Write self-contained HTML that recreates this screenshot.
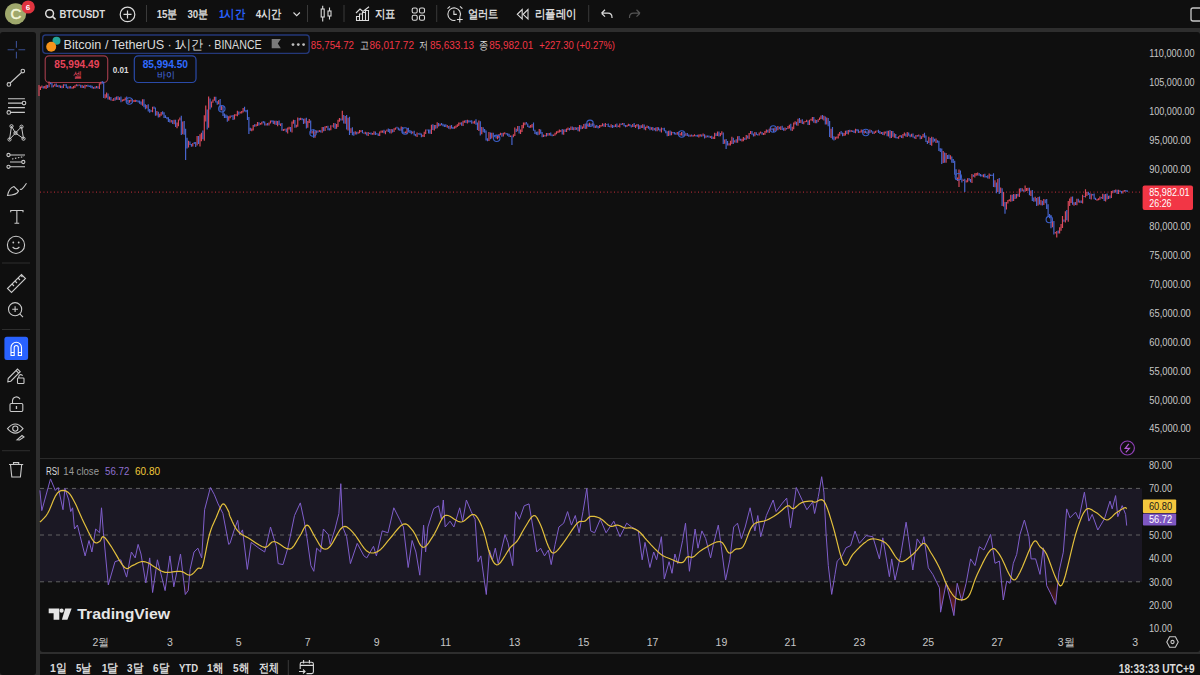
<!DOCTYPE html>
<html><head><meta charset="utf-8"><title>BTCUSDT chart</title>
<style>html,body{margin:0;padding:0;background:#0f0f0f;width:1200px;height:675px;overflow:hidden;font-family:"Liberation Sans", sans-serif;}</style>
</head><body>
<svg width="1200" height="675" viewBox="0 0 1200 675" style="display:block;font-family:&quot;Liberation Sans&quot;, sans-serif"><rect x="0" y="0" width="1200" height="675" fill="#2e2e2e"/>
<rect x="0" y="0" width="1200" height="28" fill="#0f0f0f"/>
<rect x="0" y="32" width="36" height="643" rx="3" fill="#0f0f0f"/>
<rect x="40" y="32" width="1160" height="620" rx="3" fill="#0f0f0f"/>
<rect x="40" y="654" width="1160" height="21" fill="#0f0f0f"/>
<circle cx="15.6" cy="13.8" r="10.6" fill="#9fa86c"/>
<text x="10.6" y="19.4" font-size="15" fill="#f4f6d8" font-weight="normal" stroke="#f4f6d8" stroke-width="0.5">C</text>
<circle cx="28.2" cy="7" r="6.6" fill="#e0343f"/>
<text x="25.8" y="10.0" font-size="8" fill="#ffffff" font-weight="bold" >6</text>
<g fill="none" stroke="#dbdbdb" stroke-width="1.5"><circle cx="49.6" cy="13.6" r="3.9"/><path d="M52.4 16.4 L55.6 19.4"/></g>
<text x="59.4" y="18.3" font-size="11.5" fill="#dbdbdb" font-weight="bold" textLength="45.6" lengthAdjust="spacingAndGlyphs" >BTCUSDT</text>
<g fill="none" stroke="#dbdbdb" stroke-width="1.2"><circle cx="127.5" cy="14.4" r="7.3"/><path d="M127.5 10.4 V18.4 M123.5 14.4 H131.5"/></g>
<rect x="146.0" y="5" width="1" height="17" fill="#3a3a3a"/>
<rect x="307.0" y="5" width="1" height="17" fill="#3a3a3a"/>
<rect x="343.5" y="5" width="1" height="17" fill="#3a3a3a"/>
<rect x="436.2" y="5" width="1" height="17" fill="#3a3a3a"/>
<rect x="588.2" y="5" width="1" height="17" fill="#3a3a3a"/>
<text x="156.7" y="18.3" font-size="11.5" fill="#dbdbdb" font-weight="bold" textLength="20.8" lengthAdjust="spacingAndGlyphs" >15분</text>
<text x="187.5" y="18.3" font-size="11.5" fill="#dbdbdb" font-weight="bold" textLength="20.8" lengthAdjust="spacingAndGlyphs" >30분</text>
<text x="219.0" y="18.3" font-size="11.5" fill="#2962ff" font-weight="bold" textLength="26.0" lengthAdjust="spacingAndGlyphs" >1시간</text>
<text x="255.8" y="18.3" font-size="11.5" fill="#dbdbdb" font-weight="bold" textLength="25.9" lengthAdjust="spacingAndGlyphs" >4시간</text>
<path d="M293.5 12.5 L296.7 15.7 L299.9 12.5" fill="none" stroke="#dbdbdb" stroke-width="1.1"/>
<g fill="none" stroke="#dbdbdb" stroke-width="1.1"><rect x="321.2" y="9" width="3" height="8"/><path d="M322.7 5.8 V9 M322.7 17 V21.5"/><rect x="328" y="11" width="3" height="5"/><path d="M329.5 7.5 V11 M329.5 16 V19.5"/></g>
<g fill="none" stroke="#dbdbdb" stroke-width="1.1"><path d="M356 13 L360 9 L363 11.5 L369 6.8"/><path d="M356.5 20.5 V16.5 H359.5 V20.5 M359.5 20.5 V14 H362.5 V20.5 M362.5 20.5 V12.5 H365.5 V20.5 M365.5 20.5 V10.5 H368.5 V20.5 M356 20.5 H369"/></g>
<text x="375.0" y="18.3" font-size="11.5" fill="#dbdbdb" font-weight="bold" textLength="20.8" lengthAdjust="spacingAndGlyphs" >지표</text>
<g fill="none" stroke="#dbdbdb" stroke-width="1.1"><rect x="412.2" y="8" width="5" height="5" rx="1.5"/><rect x="419.5" y="8" width="5" height="5" rx="1.5"/><rect x="412.2" y="15.3" width="5" height="5" rx="1.5"/><rect x="419.5" y="15.3" width="5" height="5" rx="1.5"/></g>
<g fill="none" stroke="#dbdbdb" stroke-width="1.1"><path d="M460 16.5 A6.3 6.3 0 1 0 455.5 20.3"/><path d="M453.9 10.5 V14.4 H456.8"/><path d="M447.5 8.6 L450 6.3 M460 6.3 L462.4 8.6"/><path d="M459.8 16.5 V22.4 M456.9 19.5 H462.7"/></g>
<text x="467.5" y="18.3" font-size="11.5" fill="#dbdbdb" font-weight="bold" textLength="30.8" lengthAdjust="spacingAndGlyphs" >얼러트</text>
<g fill="none" stroke="#dbdbdb" stroke-width="1.1"><path d="M522.2 9.5 L517.3 14.3 L522.2 19 Z"/><path d="M528 9.5 L523.1 14.3 L528 19 Z"/></g>
<text x="535.0" y="18.3" font-size="11.5" fill="#dbdbdb" font-weight="bold" textLength="41.7" lengthAdjust="spacingAndGlyphs" >리플레이</text>
<path d="M601.5 13.2 L605 9.8 M601.5 13.2 L605 16.6 M601.5 13.2 H608 Q612 13.2 612 17.5 V18" fill="none" stroke="#dbdbdb" stroke-width="1.2"/>
<path d="M640 13.2 L636.5 9.8 M640 13.2 L636.5 16.6 M640 13.2 H633.5 Q629.5 13.2 629.5 17.5 V18" fill="none" stroke="#555" stroke-width="1.2"/>
<rect x="1191" y="8" width="12" height="13" rx="2" fill="none" stroke="#c8c8c8" stroke-width="1.3"/>
<path d="M16.4 41 V47.8 M16.4 51.8 V58.6 M7.6 49.8 H14.4 M18.4 49.8 H25.2" stroke="#3a4f92" stroke-width="1.1" fill="none"/>
<g stroke="#c9c9c9" stroke-width="1.1" fill="none"><path d="M10.2 83 L21.5 72.5"/><circle cx="8.9" cy="84.4" r="1.8"/><circle cx="22.8" cy="71.1" r="1.8"/></g>
<g stroke="#c9c9c9" stroke-width="1.1" fill="none"><path d="M8 98.7 H24.9 M8 103.1 H22.3 M8 107.6 H24.9 M10.6 112.4 H24.9"/><circle cx="24" cy="103.1" r="1.8"/><circle cx="8.8" cy="112.4" r="1.8"/></g>
<g stroke="#c9c9c9" stroke-width="1" fill="none"><path d="M11.5 126.2 L15.5 133 L21.5 126.7 L23.5 138.7 L15.5 133 L9.5 139.5 Z"/><circle cx="11.5" cy="126.2" r="1.6"/><circle cx="21.5" cy="126.7" r="1.6"/><circle cx="15.5" cy="133" r="1.6"/><circle cx="9.5" cy="139.5" r="1.6"/><circle cx="23.5" cy="138.7" r="1.6"/></g>
<g stroke="#c9c9c9" stroke-width="1.1" fill="none"><path d="M10 155 H25 M10 162 H21.8 M10 166.8 H25"/><path d="M12 159 L24 156.5" stroke-dasharray="1.5 1.5"/><circle cx="8.5" cy="155" r="1.6"/><circle cx="23.3" cy="162" r="1.6"/><circle cx="8.5" cy="166.8" r="1.6"/></g>
<g stroke="#c9c9c9" stroke-width="1.1" fill="none"><path d="M7.5 195.5 Q9 188 14 186.5 L18.5 191 Q17 195 7.5 195.5 Z"/><path d="M20 189 Q21.5 191 26.5 183.3"/></g>
<g stroke="#c9c9c9" stroke-width="1.1" fill="none"><path d="M10.7 212.3 V210.5 H23 V212.3 M16.85 210.5 V223.3 M14.5 223.3 H19.2"/></g>
<g stroke="#c9c9c9" stroke-width="1.1" fill="none"><circle cx="16" cy="244.9" r="8.6"/><path d="M12.6 247 Q16 250.5 19.4 247"/></g><circle cx="13.3" cy="242.5" r="0.9" fill="#c9c9c9"/><circle cx="18.7" cy="242.5" r="0.9" fill="#c9c9c9"/>
<rect x="2" y="262.5" width="28" height="1" fill="#2e2e2e"/>
<g stroke="#c9c9c9" stroke-width="1.1" fill="none"><path d="M7.5 288.5 L21.5 274.5 L25.5 278.5 L11.5 292.5 Z"/><path d="M12 284 L14 286 M15 281 L17 283 M18 278 L20 280 M21 275.5 L22.5 277"/></g>
<g stroke="#c9c9c9" stroke-width="1.1" fill="none"><circle cx="15.1" cy="309.2" r="6.6"/><path d="M19.8 313.9 L23 317.1 M12.2 309.2 H18 M15.1 306.3 V312.1"/></g>
<rect x="2" y="329" width="28" height="1" fill="#2e2e2e"/>
<rect x="4.4" y="336.8" width="23.7" height="23.1" rx="2.5" fill="#2962ff"/>
<g stroke="#ffffff" stroke-width="1.1" fill="none"><path d="M11 355.5 V347.5 A5.25 5.25 0 0 1 21.5 347.5 V355.5 H18.3 V347.5 A2.05 2.05 0 0 0 14.2 347.5 V355.5 Z M11 352.5 H14.2 M18.3 352.5 H21.5"/></g>
<g stroke="#c9c9c9" stroke-width="1.1" fill="none"><path d="M8.2 378.5 L17.5 369 L20.2 371.7 L10.8 381.2 L7.8 381.8 Z M16 370.5 L18.7 373.2"/><rect x="17.5" y="378" width="6.5" height="5.5" rx="0.8"/><path d="M18.8 378 V376.3 A2 2 0 0 1 22.6 375.8"/></g>
<g stroke="#c9c9c9" stroke-width="1.1" fill="none"><rect x="10" y="403.5" width="12.8" height="8" rx="1.2"/><path d="M12.5 403.5 V400.5 A3.9 3.9 0 0 1 20 399.3"/></g><rect x="15.8" y="406" width="1.3" height="3" fill="#c9c9c9"/>
<g stroke="#c9c9c9" stroke-width="1.1" fill="none"><path d="M7.5 428.6 Q15.3 419.5 23 428.6 Q15.3 437.7 7.5 428.6 Z"/><circle cx="15.3" cy="428.6" r="2.6"/><path d="M17 439.8 L22 435.5 L24 437 L19.5 440 Z"/></g>
<rect x="2" y="450.2" width="28" height="1" fill="#2e2e2e"/>
<g stroke="#c9c9c9" stroke-width="1.1" fill="none"><path d="M9 464.5 H23.2 M13.5 464.5 V462.6 H18.7 V464.5 M10.5 464.5 L11.8 477 H20.4 L21.7 464.5"/></g>
<rect x="42.7" y="35" width="266.5" height="18.3" rx="3" fill="#0f0f0f" stroke="#24387a" stroke-width="1.3"/>
<circle cx="56.5" cy="40.8" r="4" fill="#26a69a"/><circle cx="51.2" cy="46.7" r="5" fill="#f7931a"/>
<text x="63.5" y="49.0" font-size="12.5" fill="#dbdbdb" font-weight="normal" textLength="100.8" lengthAdjust="spacingAndGlyphs" >Bitcoin / TetherUS</text>
<text x="167.5" y="49.0" font-size="12.5" fill="#dbdbdb" font-weight="normal" >·</text>
<text x="174.5" y="49.0" font-size="12.5" fill="#dbdbdb" font-weight="normal" >1</text>
<text x="179.3" y="49.0" font-size="12.5" fill="#dbdbdb" font-weight="normal" textLength="24.2" lengthAdjust="spacingAndGlyphs" >시간</text>
<text x="207.5" y="49.0" font-size="12.5" fill="#dbdbdb" font-weight="normal" >·</text>
<text x="214.3" y="49.0" font-size="12.5" fill="#dbdbdb" font-weight="normal" textLength="47.4" lengthAdjust="spacingAndGlyphs" >BINANCE</text>
<path d="M271.7 39 H280.8 L277.8 43.6 L280.8 48.3 H271.7 Z" fill="#7a7a7a"/>
<circle cx="293" cy="44.6" r="1.4" fill="#bdbdbd"/><circle cx="298.3" cy="44.6" r="1.4" fill="#bdbdbd"/><circle cx="303.6" cy="44.6" r="1.4" fill="#bdbdbd"/>
<text x="310.8" y="48.7" font-size="11" fill="#f23645" font-weight="normal" textLength="43.2" lengthAdjust="spacingAndGlyphs" >85,754.72</text>
<text x="360.0" y="48.7" font-size="11" fill="#dbdbdb" font-weight="normal" textLength="9.0" lengthAdjust="spacingAndGlyphs" >고</text>
<text x="369.5" y="48.7" font-size="11" fill="#f23645" font-weight="normal" textLength="44.5" lengthAdjust="spacingAndGlyphs" >86,017.72</text>
<text x="419.3" y="48.7" font-size="11" fill="#dbdbdb" font-weight="normal" textLength="9.0" lengthAdjust="spacingAndGlyphs" >저</text>
<text x="430.0" y="48.7" font-size="11" fill="#f23645" font-weight="normal" textLength="44.0" lengthAdjust="spacingAndGlyphs" >85,633.13</text>
<text x="479.0" y="48.7" font-size="11" fill="#dbdbdb" font-weight="normal" textLength="9.3" lengthAdjust="spacingAndGlyphs" >종</text>
<text x="489.3" y="48.7" font-size="11" fill="#f23645" font-weight="normal" textLength="44.0" lengthAdjust="spacingAndGlyphs" >85,982.01</text>
<text x="539.3" y="48.7" font-size="11" fill="#f23645" font-weight="normal" textLength="75.7" lengthAdjust="spacingAndGlyphs" >+227.30 (+0.27%)</text>
<rect x="45.2" y="55.8" width="62.5" height="26.7" rx="4" fill="#0f0f0f" stroke="#9a3a48" stroke-width="1.2"/>
<text x="54.3" y="68.0" font-size="10.5" fill="#e8445a" font-weight="bold" textLength="45.0" lengthAdjust="spacingAndGlyphs" >85,994.49</text>
<text x="72.5" y="78.2" font-size="9" fill="#e8445a" font-weight="normal" >셀</text>
<text x="112.7" y="73.4" font-size="9.5" fill="#dbdbdb" font-weight="bold" textLength="15.8" lengthAdjust="spacingAndGlyphs" >0.01</text>
<rect x="134.3" y="55.8" width="61.7" height="26.7" rx="4" fill="#0f0f0f" stroke="#2a4aa8" stroke-width="1.2"/>
<text x="142.7" y="68.0" font-size="10.5" fill="#2f6bff" font-weight="bold" textLength="45.3" lengthAdjust="spacingAndGlyphs" >85,994.50</text>
<text x="157.0" y="78.2" font-size="9" fill="#4a74ec" font-weight="normal" >바이</text>
<text x="1149.3" y="57.3" font-size="10.5" fill="#c7c7c7" font-weight="normal" textLength="45.2" lengthAdjust="spacingAndGlyphs" >110,000.00</text>
<text x="1149.3" y="86.1" font-size="10.5" fill="#c7c7c7" font-weight="normal" textLength="45.2" lengthAdjust="spacingAndGlyphs" >105,000.00</text>
<text x="1149.3" y="115.0" font-size="10.5" fill="#c7c7c7" font-weight="normal" textLength="45.2" lengthAdjust="spacingAndGlyphs" >100,000.00</text>
<text x="1149.3" y="143.8" font-size="10.5" fill="#c7c7c7" font-weight="normal" textLength="41.5" lengthAdjust="spacingAndGlyphs" >95,000.00</text>
<text x="1149.3" y="172.7" font-size="10.5" fill="#c7c7c7" font-weight="normal" textLength="41.5" lengthAdjust="spacingAndGlyphs" >90,000.00</text>
<text x="1149.3" y="230.4" font-size="10.5" fill="#c7c7c7" font-weight="normal" textLength="41.5" lengthAdjust="spacingAndGlyphs" >80,000.00</text>
<text x="1149.3" y="259.2" font-size="10.5" fill="#c7c7c7" font-weight="normal" textLength="41.5" lengthAdjust="spacingAndGlyphs" >75,000.00</text>
<text x="1149.3" y="288.1" font-size="10.5" fill="#c7c7c7" font-weight="normal" textLength="41.5" lengthAdjust="spacingAndGlyphs" >70,000.00</text>
<text x="1149.3" y="316.9" font-size="10.5" fill="#c7c7c7" font-weight="normal" textLength="41.5" lengthAdjust="spacingAndGlyphs" >65,000.00</text>
<text x="1149.3" y="345.8" font-size="10.5" fill="#c7c7c7" font-weight="normal" textLength="41.5" lengthAdjust="spacingAndGlyphs" >60,000.00</text>
<text x="1149.3" y="374.6" font-size="10.5" fill="#c7c7c7" font-weight="normal" textLength="41.5" lengthAdjust="spacingAndGlyphs" >55,000.00</text>
<text x="1149.3" y="403.5" font-size="10.5" fill="#c7c7c7" font-weight="normal" textLength="41.5" lengthAdjust="spacingAndGlyphs" >50,000.00</text>
<text x="1149.3" y="432.3" font-size="10.5" fill="#c7c7c7" font-weight="normal" textLength="41.5" lengthAdjust="spacingAndGlyphs" >45,000.00</text>
<path d="M40 192.1 H1140" stroke="#f23645" stroke-width="1" stroke-dasharray="1 2.5" opacity="0.8"/>
<path d="M39.0 85.0V96.0M40.44 86.6V90.0M41.88 85.6V87.9M44.75 86.0V88.5M46.19 84.7V89.1M49.06 81.5V87.2M53.38 85.2V87.3M54.81 83.7V86.3M57.69 85.3V86.9M60.56 85.5V88.1M63.44 84.3V88.1M69.19 86.3V88.6M72.06 86.9V88.8M73.5 85.9V88.4M74.94 85.2V88.1M76.38 84.2V86.3M79.25 84.6V85.8M82.12 85.1V88.1M85.0 84.8V88.6M86.44 85.0V86.5M93.62 87.1V88.7M96.5 85.9V88.2M99.38 83.3V89.0M100.81 81.8V84.6M105.12 94.2V98.6M106.56 92.6V97.7M109.44 96.5V99.8M112.31 99.4V100.7M113.75 98.1V101.0M116.62 96.4V99.8M119.5 97.3V100.1M122.38 99.6V101.5M123.81 99.0V101.1M125.25 97.4V100.3M129.56 100.0V102.8M131.0 99.5V101.4M133.88 99.9V102.1M135.31 99.7V102.0M142.5 99.2V105.8M146.81 105.1V108.6M152.56 106.8V112.3M156.88 111.0V115.6M159.75 113.7V117.3M161.19 112.0V115.7M171.25 120.1V122.6M174.12 119.8V124.3M177.0 122.4V128.2M178.44 119.5V126.2M179.88 117.6V120.6M182.75 121.4V134.2M188.5 140.7V147.6M192.81 142.9V146.6M197.12 136.1V145.5M200.0 134.3V146.5M201.44 132.7V141.2M204.31 115.2V140.7M205.75 105.6V121.5M208.62 96.4V127.7M211.5 101.4V107.4M212.94 99.5V102.7M214.38 96.7V100.8M218.69 99.9V104.2M221.56 105.4V110.2M228.75 116.3V120.7M230.19 115.6V118.3M234.5 114.3V119.4M235.94 114.2V115.8M237.38 110.7V116.3M240.25 111.7V113.6M241.69 111.0V113.5M243.12 108.1V112.4M251.75 128.6V131.3M253.19 125.0V130.5M256.06 124.2V126.5M257.5 121.9V125.9M260.38 122.9V124.8M261.81 121.8V124.5M266.12 123.6V125.6M269.0 122.6V125.5M270.44 120.4V123.5M274.75 120.8V124.5M277.62 121.1V126.3M280.5 123.5V126.1M283.38 129.1V130.9M284.81 128.7V130.4M287.69 127.4V133.6M289.12 126.8V129.4M292.0 121.4V132.5M293.44 119.8V123.8M296.31 124.8V127.4M297.75 117.4V126.8M300.62 117.8V120.0M304.94 118.4V123.5M307.81 121.1V127.8M309.25 119.1V122.9M312.12 130.7V133.6M315.0 131.2V137.7M316.44 130.5V133.1M319.31 130.0V132.0M322.19 127.0V132.7M325.06 126.2V130.9M326.5 126.1V127.7M330.81 125.3V130.2M333.69 123.0V127.7M336.56 123.9V128.8M338.0 119.8V126.9M339.44 117.9V121.8M342.31 110.8V120.6M345.19 116.0V123.7M348.06 117.7V130.5M350.94 128.3V133.1M355.25 131.2V134.6M358.12 131.8V133.7M359.56 130.1V133.3M361.0 130.3V131.9M365.31 131.7V134.2M368.19 131.9V136.1M372.5 132.9V134.7M373.94 131.3V134.8M379.69 131.4V136.0M381.12 130.6V132.8M382.56 130.5V132.7M385.44 130.7V134.2M386.88 129.4V131.6M391.19 129.0V133.4M394.06 128.3V132.0M395.5 127.5V129.7M401.25 126.6V130.7M405.56 131.5V133.2M407.0 128.7V134.3M412.75 131.5V133.4M417.06 132.5V137.0M422.81 134.7V136.7M424.25 131.8V137.1M425.69 129.4V134.1M431.44 124.7V134.1M434.31 125.1V130.6M437.19 122.3V128.3M440.06 123.7V125.9M447.25 125.1V127.8M450.12 125.6V129.3M454.44 126.3V128.8M455.88 125.4V128.3M457.31 124.3V127.1M458.75 122.6V126.0M460.19 122.6V124.4M463.06 120.7V126.0M464.5 120.6V122.7M467.38 119.8V123.4M473.12 121.4V123.5M474.56 120.7V123.8M478.88 120.4V131.1M481.75 127.1V134.3M488.94 131.9V141.1M491.81 132.7V138.4M497.56 135.9V139.2M499.0 133.9V138.1M500.44 132.7V135.3M503.31 132.7V136.6M504.75 132.3V134.2M510.5 135.5V137.0M513.38 134.2V137.3M514.81 127.6V136.1M517.69 125.9V131.3M520.56 129.6V133.9M522.0 125.0V131.9M523.44 122.6V128.3M524.88 122.4V125.2M530.62 124.9V127.7M532.06 123.9V127.6M539.25 129.0V134.8M543.56 134.5V137.0M546.44 133.1V136.5M549.31 133.0V135.6M553.62 134.4V136.0M555.06 132.7V135.4M556.5 131.3V134.2M557.94 130.8V133.1M559.38 129.4V132.5M560.81 130.0V132.0M563.69 129.6V134.8M566.56 128.4V132.1M568.0 127.4V130.1M570.88 126.6V130.1M573.75 127.2V130.3M576.62 127.6V129.8M579.5 125.1V131.4M582.38 126.4V128.9M583.81 124.0V128.2M586.69 123.5V128.7M589.56 122.8V126.4M592.44 123.3V126.3M595.31 125.5V127.9M599.62 125.0V128.0M601.06 125.1V126.7M602.5 123.3V126.3M605.38 123.1V126.9M611.12 124.3V127.4M615.44 124.3V127.1M618.31 125.4V127.1M619.75 123.6V127.4M622.62 123.1V124.8M626.94 125.0V126.9M628.38 123.8V126.0M632.69 124.0V127.0M635.56 125.1V127.9M637.0 124.0V126.6M639.88 125.2V128.9M642.75 124.3V128.1M645.62 126.8V130.2M647.06 125.4V127.9M651.38 127.3V129.8M654.25 127.9V130.2M657.12 126.9V131.3M661.44 127.6V132.5M668.62 130.7V136.1M671.5 131.6V135.3M677.25 132.0V134.7M680.12 133.2V135.5M681.56 132.0V135.4M684.44 134.3V136.1M685.88 133.2V135.7M690.19 134.7V136.7M693.06 135.0V136.8M694.5 134.2V136.3M698.81 134.5V137.4M700.25 134.2V136.5M703.12 133.6V136.2M706.0 135.6V137.8M710.31 136.0V138.1M713.19 136.8V139.1M714.62 132.7V138.9M717.5 131.5V136.0M720.38 132.9V136.2M721.81 131.2V134.7M724.69 139.4V143.7M729.0 143.3V145.4M730.44 140.8V145.5M731.88 136.8V144.0M734.75 140.3V142.6M737.62 136.2V142.8M741.94 138.8V141.6M743.38 136.9V141.2M746.25 135.1V139.7M749.12 133.0V138.9M750.56 131.1V134.0M754.88 131.9V136.2M759.19 132.6V135.5M760.62 131.5V133.6M763.5 133.1V135.1M764.94 131.1V134.7M766.38 129.4V132.8M769.25 128.8V133.0M770.69 127.5V130.5M775.0 127.6V131.5M777.88 126.1V130.3M780.75 126.3V130.0M785.06 127.4V130.7M787.94 125.9V128.9M789.38 124.8V128.6M792.25 126.8V130.9M793.69 122.4V129.2M795.12 121.2V124.4M798.0 118.8V125.8M800.88 119.7V123.1M803.75 121.6V124.2M805.19 121.0V122.3M806.62 119.8V121.9M809.5 119.7V125.0M810.94 118.8V120.6M812.38 117.1V121.2M815.25 119.4V123.3M818.12 119.2V122.0M819.56 117.4V119.9M821.0 115.4V118.9M823.88 115.7V120.4M826.75 117.4V124.5M831.06 128.7V137.9M835.38 136.7V139.7M836.81 136.5V138.4M838.25 133.7V138.4M839.69 131.9V135.7M844.0 133.0V136.0M845.44 130.7V135.5M848.31 130.0V134.5M851.19 129.9V132.1M855.5 128.7V133.2M859.81 131.2V132.8M861.25 129.5V132.4M864.12 130.7V133.4M868.44 131.1V133.5M869.88 129.6V133.0M874.19 131.5V133.9M875.62 130.8V133.0M877.06 130.6V131.4M881.38 131.9V134.0M884.25 131.6V135.3M885.69 131.4V133.6M888.56 130.8V136.5M891.44 131.1V138.0M894.31 133.3V137.8M898.62 136.2V138.7M900.06 135.0V137.1M902.94 134.1V138.3M904.38 132.6V135.7M907.25 132.1V136.9M911.56 133.8V136.7M915.88 135.0V139.0M918.75 134.5V136.4M921.62 136.2V138.9M923.06 134.0V137.3M928.81 136.8V142.9M931.69 136.7V145.8M936.0 138.5V143.1M943.19 150.9V162.9M946.06 152.9V162.8M950.38 155.3V159.4M957.56 177.4V181.1M959.0 169.5V187.0M963.31 179.5V181.0M966.19 180.3V182.6M967.62 178.2V182.2M971.94 174.1V183.1M974.81 173.3V177.4M976.25 173.0V175.7M977.69 172.5V175.5M983.44 174.3V177.3M989.19 173.6V178.8M994.94 180.2V187.2M997.81 178.9V192.0M1000.69 187.5V193.1M1003.56 192.0V206.5M1006.44 201.9V209.4M1007.88 200.1V203.6M1009.31 199.3V201.2M1010.75 194.8V201.7M1013.62 194.1V201.0M1016.5 193.9V198.6M1019.38 188.4V197.1M1022.25 188.3V191.3M1025.12 185.6V191.7M1026.56 188.1V191.1M1028.0 187.7V190.7M1030.88 190.4V196.0M1035.19 196.7V201.5M1038.06 197.0V205.5M1040.94 200.0V205.3M1043.81 199.1V205.1M1052.44 218.8V227.2M1055.31 232.1V233.4M1056.75 230.9V237.4M1059.62 227.3V233.5M1061.06 223.9V230.8M1062.5 216.1V228.1M1065.38 211.3V222.5M1068.25 200.9V221.7M1069.69 198.4V205.9M1071.12 196.7V202.9M1074.0 202.3V205.8M1076.88 198.7V205.2M1079.75 200.5V202.8M1082.62 194.8V203.5M1085.5 189.3V197.5M1086.94 191.9V195.9M1091.25 193.8V199.6M1097.0 199.1V200.8M1098.44 198.3V200.3M1099.88 196.6V199.7M1102.75 193.7V199.0M1105.62 193.9V201.6M1108.5 195.8V198.9M1111.38 190.9V198.1M1112.81 190.6V193.2M1115.69 189.6V192.6M1118.56 189.8V193.9M1122.88 190.7V193.5M1124.31 189.9V191.8" stroke="#dc4a5c" stroke-width="1.15" fill="none"/>
<path d="M43.31 86.2V88.5M47.62 85.0V88.1M50.5 82.4V84.3M51.94 83.1V87.4M56.25 83.4V86.9M59.12 85.1V87.5M62.0 85.7V88.3M64.88 84.2V85.7M66.31 84.3V88.0M67.75 86.6V88.8M70.62 86.0V88.6M77.81 84.6V86.2M80.69 84.8V87.7M83.56 85.7V88.1M87.88 84.7V86.8M89.31 85.6V86.9M90.75 85.3V87.8M92.19 85.8V88.4M95.06 86.4V88.8M97.94 86.2V88.4M102.25 81.0V83.7M103.69 81.7V98.1M108.0 93.4V99.6M110.88 96.9V100.6M115.19 97.3V100.4M118.06 96.2V100.0M120.94 96.5V102.2M126.69 96.6V101.9M128.12 99.8V103.6M132.44 98.9V102.5M136.75 100.0V101.7M138.19 100.5V102.6M139.62 100.6V103.8M141.06 101.6V104.7M143.94 99.2V107.3M145.38 104.2V109.2M148.25 104.2V111.4M149.69 109.1V112.7M151.12 110.2V111.7M154.0 106.5V108.8M155.44 107.4V115.7M158.31 111.7V117.5M162.62 111.3V114.6M164.06 112.3V117.9M165.5 115.2V118.1M166.94 116.9V119.2M168.38 117.3V122.0M169.81 119.0V122.5M172.69 120.2V124.0M175.56 119.7V127.0M181.31 115.7V135.1M184.19 121.1V134.8M185.62 128.7V160.0M187.06 137.8V148.5M189.94 141.4V145.1M191.38 144.0V146.8M194.25 142.1V143.9M195.69 141.9V147.0M198.56 135.9V144.1M202.88 130.6V139.3M207.19 109.4V129.6M210.06 98.4V109.5M215.81 96.8V102.5M217.25 101.3V104.7M220.12 99.1V110.4M223.0 106.7V116.1M224.44 113.4V118.1M225.88 114.4V118.0M227.31 115.5V121.8M231.62 115.5V116.7M233.06 114.9V119.9M238.81 111.6V114.8M244.56 106.7V111.4M246.0 109.9V112.3M247.44 109.8V119.9M248.88 116.9V134.0M250.31 127.8V130.7M254.62 124.3V126.7M258.94 122.2V125.5M263.25 121.1V123.2M264.69 121.4V125.4M267.56 123.0V125.4M271.88 120.2V122.3M273.31 120.4V123.9M276.19 120.7V125.0M279.06 120.5V125.0M281.94 123.0V130.8M286.25 128.4V132.3M290.56 126.9V131.8M294.88 120.0V127.7M299.19 118.0V120.4M302.06 118.0V120.3M303.5 118.7V124.0M306.38 117.8V128.5M310.69 120.4V133.5M313.56 129.6V137.8M317.88 130.6V132.8M320.75 130.2V132.4M323.62 127.0V131.2M327.94 125.7V130.3M329.38 128.3V130.6M332.25 125.4V126.6M335.12 123.2V129.0M340.88 118.4V120.4M343.75 115.1V123.6M346.62 115.0V129.5M349.5 116.7V135.0M352.38 127.2V135.2M353.81 131.8V135.8M356.69 131.7V134.5M362.44 129.9V133.3M363.88 132.4V133.8M366.75 132.3V135.6M369.62 132.8V134.1M371.06 132.6V134.7M375.38 131.5V135.1M376.81 133.2V134.6M378.25 133.5V136.1M384.0 129.7V133.3M388.31 128.4V131.9M389.75 129.1V133.3M392.62 129.2V132.4M396.94 126.7V128.4M398.38 127.5V130.2M399.81 128.4V130.7M402.69 126.9V132.9M404.12 131.8V133.7M408.44 127.8V132.1M409.88 130.0V132.9M411.31 130.8V134.3M414.19 130.7V135.5M415.62 134.1V136.2M418.5 133.3V134.6M419.94 132.7V135.0M421.38 133.5V137.2M427.12 129.6V130.6M428.56 129.4V133.6M430.0 129.6V133.7M432.88 124.2V130.0M435.75 124.9V128.8M438.62 122.9V126.5M441.5 123.1V125.3M442.94 123.8V126.3M444.38 124.4V127.0M445.81 124.3V127.1M448.69 125.9V128.7M451.56 124.9V128.4M453.0 126.9V128.9M461.62 122.3V125.7M465.94 120.0V123.1M468.81 120.2V122.5M470.25 120.4V122.2M471.69 120.2V123.7M476.0 119.2V124.7M477.44 122.5V130.1M480.31 121.3V135.4M483.19 127.2V132.2M484.62 128.9V132.8M486.06 130.4V140.5M487.5 138.2V141.3M490.38 132.5V139.3M493.25 132.7V136.8M494.69 135.2V136.7M496.12 135.3V138.4M501.88 133.0V136.7M506.19 132.9V134.6M507.62 133.2V135.7M509.06 133.8V137.0M511.94 135.5V145.0M516.25 128.8V131.9M519.12 125.9V133.6M526.31 122.0V124.6M527.75 123.6V127.1M529.19 125.7V128.0M533.5 122.6V130.8M534.94 129.7V133.9M536.38 131.7V134.7M537.81 131.5V135.3M540.69 129.4V133.8M542.12 132.1V137.3M545.0 134.9V136.4M547.88 133.1V135.8M550.75 132.6V135.7M552.19 134.5V136.3M562.25 129.1V134.5M565.12 129.2V132.0M569.44 128.0V130.4M572.31 126.5V130.0M575.19 127.0V130.0M578.06 127.1V131.3M580.94 125.2V129.2M585.25 123.4V129.1M588.12 123.6V126.4M591.0 123.8V125.7M593.88 123.7V127.8M596.75 125.0V127.7M598.19 126.0V128.4M603.94 123.7V126.7M606.81 123.9V124.7M608.25 123.5V127.1M609.69 125.7V127.2M612.56 125.0V127.9M614.0 125.6V127.2M616.88 123.6V127.4M621.19 123.4V124.9M624.06 123.0V126.2M625.5 124.9V127.3M629.81 124.0V126.2M631.25 125.3V127.6M634.12 122.9V127.0M638.44 124.3V129.2M641.31 125.3V128.0M644.19 124.5V129.6M648.5 126.1V128.8M649.94 126.8V130.2M652.81 127.1V130.7M655.69 127.6V131.2M658.56 127.2V130.2M660.0 128.8V131.6M662.88 128.3V129.5M664.31 127.8V131.3M665.75 130.2V133.3M667.19 131.2V136.2M670.06 130.4V135.6M672.94 131.9V133.3M674.38 131.9V134.6M675.81 132.8V134.7M678.69 131.7V135.5M683.0 132.0V136.5M687.31 133.1V136.0M688.75 134.4V136.7M691.62 134.5V136.6M695.94 135.0V136.5M697.38 134.7V136.8M701.69 134.4V136.8M704.56 134.2V138.6M707.44 135.6V137.3M708.88 135.6V137.6M711.75 135.7V139.1M716.06 133.2V136.1M718.94 131.4V136.4M723.25 132.4V144.1M726.12 139.0V149.0M727.56 140.9V145.4M733.31 137.8V143.9M736.19 139.3V142.8M739.06 135.9V140.4M740.5 138.7V140.8M744.81 137.8V140.0M747.69 135.4V138.6M752.0 131.1V134.8M753.44 133.5V136.4M756.31 132.2V135.1M757.75 134.0V135.6M762.06 132.0V134.8M767.81 129.7V132.6M772.12 128.2V130.2M773.56 128.3V132.0M776.44 127.3V130.2M779.31 126.7V129.3M782.19 125.8V129.9M783.62 127.8V130.7M786.5 127.9V129.6M790.81 123.8V130.6M796.56 121.8V125.5M799.44 117.9V123.1M802.31 119.2V124.0M808.06 120.4V125.1M813.81 117.1V122.8M816.69 120.0V123.3M822.44 115.0V119.6M825.31 116.4V124.5M828.19 118.1V126.3M829.62 121.1V137.0M832.5 127.0V139.5M833.94 136.3V140.6M841.12 131.1V134.2M842.56 132.4V136.3M846.88 130.6V134.0M849.75 129.8V132.3M852.62 130.4V132.1M854.06 130.4V132.9M856.94 129.0V131.2M858.38 129.4V133.0M862.69 129.8V133.0M865.56 130.6V133.0M867.0 131.6V134.0M871.31 130.0V132.5M872.75 131.3V133.9M878.5 129.8V132.9M879.94 130.9V134.0M882.81 132.0V135.1M887.12 130.7V136.3M890.0 129.9V138.2M892.88 130.9V136.8M895.75 133.9V138.2M897.19 136.9V138.5M901.5 135.3V138.1M905.81 133.5V136.6M908.69 132.5V135.8M910.12 134.4V137.3M913.0 133.4V137.4M914.44 136.4V138.6M917.31 135.1V136.7M920.19 135.3V139.3M924.5 132.8V137.7M925.94 135.5V142.0M927.38 140.8V144.1M930.25 137.9V145.1M933.12 137.3V142.6M934.56 138.8V141.6M937.44 140.3V142.7M938.88 140.7V151.0M940.31 148.3V152.0M941.75 148.6V164.0M944.62 152.4V162.8M947.5 154.9V159.1M948.94 154.4V159.0M951.81 156.4V162.8M953.25 158.9V163.1M954.69 160.7V174.7M956.12 169.3V180.0M960.44 170.6V180.1M961.88 178.4V182.5M964.75 178.8V192.0M969.06 177.9V180.8M970.5 178.9V182.3M973.38 174.8V176.8M979.12 173.0V175.8M980.56 173.9V176.5M982.0 174.7V176.6M984.88 173.8V177.5M986.31 176.0V177.5M987.75 175.3V178.6M990.62 174.5V176.1M992.06 174.7V176.1M993.5 173.2V187.0M996.38 182.5V193.2M999.25 178.0V193.9M1002.12 188.3V205.9M1005.0 202.0V213.7M1012.19 194.8V201.3M1015.06 194.3V199.0M1017.94 193.7V196.6M1020.81 188.1V191.7M1023.69 189.5V191.8M1029.44 187.7V195.3M1032.31 190.0V201.1M1033.75 197.6V201.8M1036.62 198.1V206.1M1039.5 196.6V204.4M1042.38 200.7V205.4M1045.25 199.5V203.3M1046.69 199.0V209.1M1048.12 204.2V215.9M1049.56 214.1V218.2M1051.0 215.1V228.2M1053.88 221.0V234.4M1058.19 230.6V233.5M1063.94 219.4V221.8M1066.81 209.9V220.2M1072.56 196.5V204.8M1075.44 202.1V205.1M1078.31 198.8V202.4M1081.19 200.5V203.1M1084.06 196.0V197.1M1088.38 191.8V194.9M1089.81 193.1V199.0M1092.69 193.9V195.5M1094.12 193.5V199.2M1095.56 197.7V200.1M1101.31 197.0V198.6M1104.19 194.3V201.1M1107.06 193.5V199.4M1109.94 195.5V198.5M1114.25 190.1V192.7M1117.12 189.7V194.1M1120.0 190.2V192.0M1121.44 191.0V193.5M1125.75 189.9V191.6M1127.19 190.2V192.0" stroke="#4a68d4" stroke-width="1.15" fill="none"/>
<circle cx="129.3" cy="101.0" r="3.2" fill="none" stroke="#3b5fc8" stroke-width="1.1"/>
<circle cx="221.8" cy="108.8" r="3.2" fill="none" stroke="#3b5fc8" stroke-width="1.1"/>
<circle cx="313" cy="133.0" r="3.2" fill="none" stroke="#3b5fc8" stroke-width="1.1"/>
<circle cx="405" cy="131.0" r="3.2" fill="none" stroke="#3b5fc8" stroke-width="1.1"/>
<circle cx="496.7" cy="138.3" r="3.2" fill="none" stroke="#3b5fc8" stroke-width="1.1"/>
<circle cx="590" cy="123.3" r="3.2" fill="none" stroke="#3b5fc8" stroke-width="1.1"/>
<circle cx="681.7" cy="134.0" r="3.2" fill="none" stroke="#3b5fc8" stroke-width="1.1"/>
<circle cx="773.3" cy="129.0" r="3.2" fill="none" stroke="#3b5fc8" stroke-width="1.1"/>
<circle cx="865.8" cy="132.5" r="3.2" fill="none" stroke="#3b5fc8" stroke-width="1.1"/>
<circle cx="958.3" cy="176.7" r="3.2" fill="none" stroke="#3b5fc8" stroke-width="1.1"/>
<circle cx="1049.3" cy="219.6" r="3.2" fill="none" stroke="#3b5fc8" stroke-width="1.1"/>
<rect x="1142.6" y="185.6" width="50.4" height="24.4" rx="2" fill="#f23645"/>
<text x="1149.3" y="196.2" font-size="10" fill="#ffffff" font-weight="normal" textLength="40.2" lengthAdjust="spacingAndGlyphs" >85,982.01</text>
<text x="1149.3" y="207.1" font-size="10" fill="#ffffff" font-weight="normal" textLength="22.2" lengthAdjust="spacingAndGlyphs" >26:26</text>
<circle cx="1127.4" cy="448" r="7" fill="#0f0f0f" stroke="#8e3fb5" stroke-width="1.2"/>
<path d="M1128.8 443.8 L1125.2 448.4 H1129.4 L1125.8 452.4" stroke="#b65bd8" stroke-width="1.2" fill="none"/>
<rect x="40" y="458" width="1160" height="1" fill="#2a2a2a"/>
<rect x="40" y="488.4" width="1102" height="93.4" fill="#1b1824"/>
<path d="M40 488.4 H1140" stroke="#6a6a6a" stroke-width="1" stroke-dasharray="4 4" opacity="0.9"/>
<path d="M40 535.0 H1140" stroke="#6a6a6a" stroke-width="1" stroke-dasharray="4 4" opacity="0.9"/>
<path d="M40 581.8 H1140" stroke="#6a6a6a" stroke-width="1" stroke-dasharray="4 4" opacity="0.9"/>
<clipPath id="below30"><rect x="40" y="581.75" width="1100" height="60"/></clipPath>
<linearGradient id="osg" x1="0" y1="581.75" x2="0" y2="628.45" gradientUnits="userSpaceOnUse"><stop offset="0" stop-color="#f23645" stop-opacity="0"/><stop offset="1" stop-color="#f23645" stop-opacity="0.75"/></linearGradient>
<polygon points="39.9,581.75 39.9,490.4 41.8,510.6 50.5,478.9 55.3,490.4 58.2,487.5 63.0,509.7 64.9,488.5 68.8,500.0 70.7,511.6 72.6,507.8 74.5,529.0 77.4,525.0 80.3,536.7 85.1,555.9 89.0,540.5 91.9,552.0 95.7,529.0 99.6,532.8 101.5,507.8 103.4,532.8 108.3,584.8 115.0,561.7 120.8,559.8 126.6,577.1 131.4,552.0 135.2,557.9 138.1,544.4 141.0,554.0 145.8,582.9 149.7,557.9 152.6,592.5 157.4,559.8 165.1,590.6 169.9,555.9 173.8,586.8 180.5,554.0 185.3,594.5 188.2,590.6 190.1,569.4 194.0,552.0 197.9,548.2 201.7,557.9 204.6,509.7 210.4,487.5 214.2,494.3 218.1,503.9 222.9,513.5 228.7,544.4 230.0,543.4 233.9,530.9 237.7,520.3 239.6,534.7 242.5,529.9 247.3,569.4 251.2,542.4 258.9,548.2 264.7,552.0 270.5,527.0 276.2,546.3 278.2,563.6 283.0,564.6 287.8,548.2 294.5,515.5 300.3,502.9 304.2,521.2 307.1,538.6 310.9,565.6 313.8,571.3 316.7,548.2 320.6,552.0 323.4,529.0 328.3,534.7 330.2,544.4 335.0,529.0 338.9,513.5 340.8,483.7 342.7,527.0 346.6,536.7 350.4,563.6 357.2,543.4 363.9,555.9 366.8,557.9 373.5,546.3 376.4,555.9 382.2,530.9 388.0,532.8 393.8,507.8 399.6,519.3 403.4,527.0 408.2,567.5 412.1,540.5 415.9,552.0 419.8,575.2 423.6,525.1 425.6,552.0 427.9,527.0 433.7,508.7 438.5,505.8 441.4,519.3 443.3,500.0 445.2,527.0 450.0,521.2 453.9,527.0 459.7,507.8 462.6,521.2 466.4,500.0 471.2,511.6 475.1,519.3 478.0,561.7 480.9,555.9 483.8,577.1 486.3,594.5 489.5,550.1 492.4,559.8 495.3,548.2 498.2,563.6 505.0,534.7 507.9,542.4 512.7,565.6 515.6,511.6 519.4,519.3 524.2,505.8 529.0,503.9 532.9,527.0 536.8,552.0 540.6,548.2 544.5,555.9 548.3,550.1 551.2,564.6 555.1,544.4 558.9,527.0 563.7,523.2 567.6,511.6 571.4,525.1 575.3,515.5 579.1,532.8 583.0,511.6 586.8,488.5 590.7,530.9 594.6,532.8 600.3,519.3 606.1,532.8 613.8,521.2 620.0,536.7 626.7,523.2 631.6,527.0 638.3,530.9 642.2,559.8 645.0,542.4 649.9,567.5 653.7,552.0 656.6,559.8 661.4,536.7 664.3,579.0 669.1,561.7 672.0,573.3 674.9,554.0 677.8,563.6 682.6,540.5 685.5,523.2 689.4,571.3 695.1,529.0 698.0,548.2 701.9,530.9 705.7,538.6 710.6,557.9 713.4,544.4 718.3,525.1 721.2,546.3 725.6,580.0 729.8,559.8 733.7,527.0 737.5,523.2 741.4,538.6 745.2,527.0 750.1,507.8 754.9,530.9 757.8,515.5 760.7,536.7 766.4,515.5 773.2,500.0 776.1,511.6 781.8,503.9 786.7,498.1 790.5,528.0 796.3,487.5 802.1,500.0 806.9,509.7 812.7,502.0 814.6,513.5 818.3,496.7 821.7,476.7 823.9,492.2 826.1,534.4 828.3,565.6 831.7,594.4 835.0,574.4 837.2,561.1 841.7,556.7 846.1,547.8 850.6,545.6 855.0,531.1 859.4,543.3 866.1,535.6 872.8,536.7 879.4,558.9 882.8,537.8 889.4,576.7 891.7,558.9 895.0,580.0 900.6,555.6 906.1,522.2 908.3,536.7 912.8,570.0 917.2,538.9 921.7,545.6 923.9,536.7 928.3,567.8 932.8,574.4 939.4,587.8 940.6,612.2 946.1,583.3 950.6,601.1 953.9,615.6 957.2,583.3 961.7,601.1 966.1,583.3 970.6,558.9 975.0,565.6 979.4,546.7 983.9,550.0 990.6,534.4 995.0,563.3 999.4,561.1 1003.3,600.0 1006.7,581.1 1010.0,583.3 1013.3,563.3 1016.7,554.4 1020.0,534.4 1024.4,520.0 1028.9,536.7 1031.1,558.9 1035.6,558.9 1040.0,574.4 1043.3,547.8 1046.7,585.6 1051.1,594.4 1055.6,604.4 1058.9,572.2 1063.3,552.2 1066.7,508.9 1070.0,517.8 1075.6,512.2 1078.9,518.9 1084.4,492.2 1088.9,521.1 1092.2,514.4 1097.8,530.0 1104.4,518.9 1110.0,501.1 1112.2,508.9 1115.6,495.6 1117.8,516.7 1122.2,505.6 1125.6,514.4 1126.7,525.6 1126.7,581.75" fill="url(#osg)" clip-path="url(#below30)"/>
<polyline points="39.9,490.4 41.8,510.6 50.5,478.9 55.3,490.4 58.2,487.5 63.0,509.7 64.9,488.5 68.8,500.0 70.7,511.6 72.6,507.8 74.5,529.0 77.4,525.0 80.3,536.7 85.1,555.9 89.0,540.5 91.9,552.0 95.7,529.0 99.6,532.8 101.5,507.8 103.4,532.8 108.3,584.8 115.0,561.7 120.8,559.8 126.6,577.1 131.4,552.0 135.2,557.9 138.1,544.4 141.0,554.0 145.8,582.9 149.7,557.9 152.6,592.5 157.4,559.8 165.1,590.6 169.9,555.9 173.8,586.8 180.5,554.0 185.3,594.5 188.2,590.6 190.1,569.4 194.0,552.0 197.9,548.2 201.7,557.9 204.6,509.7 210.4,487.5 214.2,494.3 218.1,503.9 222.9,513.5 228.7,544.4 230.0,543.4 233.9,530.9 237.7,520.3 239.6,534.7 242.5,529.9 247.3,569.4 251.2,542.4 258.9,548.2 264.7,552.0 270.5,527.0 276.2,546.3 278.2,563.6 283.0,564.6 287.8,548.2 294.5,515.5 300.3,502.9 304.2,521.2 307.1,538.6 310.9,565.6 313.8,571.3 316.7,548.2 320.6,552.0 323.4,529.0 328.3,534.7 330.2,544.4 335.0,529.0 338.9,513.5 340.8,483.7 342.7,527.0 346.6,536.7 350.4,563.6 357.2,543.4 363.9,555.9 366.8,557.9 373.5,546.3 376.4,555.9 382.2,530.9 388.0,532.8 393.8,507.8 399.6,519.3 403.4,527.0 408.2,567.5 412.1,540.5 415.9,552.0 419.8,575.2 423.6,525.1 425.6,552.0 427.9,527.0 433.7,508.7 438.5,505.8 441.4,519.3 443.3,500.0 445.2,527.0 450.0,521.2 453.9,527.0 459.7,507.8 462.6,521.2 466.4,500.0 471.2,511.6 475.1,519.3 478.0,561.7 480.9,555.9 483.8,577.1 486.3,594.5 489.5,550.1 492.4,559.8 495.3,548.2 498.2,563.6 505.0,534.7 507.9,542.4 512.7,565.6 515.6,511.6 519.4,519.3 524.2,505.8 529.0,503.9 532.9,527.0 536.8,552.0 540.6,548.2 544.5,555.9 548.3,550.1 551.2,564.6 555.1,544.4 558.9,527.0 563.7,523.2 567.6,511.6 571.4,525.1 575.3,515.5 579.1,532.8 583.0,511.6 586.8,488.5 590.7,530.9 594.6,532.8 600.3,519.3 606.1,532.8 613.8,521.2 620.0,536.7 626.7,523.2 631.6,527.0 638.3,530.9 642.2,559.8 645.0,542.4 649.9,567.5 653.7,552.0 656.6,559.8 661.4,536.7 664.3,579.0 669.1,561.7 672.0,573.3 674.9,554.0 677.8,563.6 682.6,540.5 685.5,523.2 689.4,571.3 695.1,529.0 698.0,548.2 701.9,530.9 705.7,538.6 710.6,557.9 713.4,544.4 718.3,525.1 721.2,546.3 725.6,580.0 729.8,559.8 733.7,527.0 737.5,523.2 741.4,538.6 745.2,527.0 750.1,507.8 754.9,530.9 757.8,515.5 760.7,536.7 766.4,515.5 773.2,500.0 776.1,511.6 781.8,503.9 786.7,498.1 790.5,528.0 796.3,487.5 802.1,500.0 806.9,509.7 812.7,502.0 814.6,513.5 818.3,496.7 821.7,476.7 823.9,492.2 826.1,534.4 828.3,565.6 831.7,594.4 835.0,574.4 837.2,561.1 841.7,556.7 846.1,547.8 850.6,545.6 855.0,531.1 859.4,543.3 866.1,535.6 872.8,536.7 879.4,558.9 882.8,537.8 889.4,576.7 891.7,558.9 895.0,580.0 900.6,555.6 906.1,522.2 908.3,536.7 912.8,570.0 917.2,538.9 921.7,545.6 923.9,536.7 928.3,567.8 932.8,574.4 939.4,587.8 940.6,612.2 946.1,583.3 950.6,601.1 953.9,615.6 957.2,583.3 961.7,601.1 966.1,583.3 970.6,558.9 975.0,565.6 979.4,546.7 983.9,550.0 990.6,534.4 995.0,563.3 999.4,561.1 1003.3,600.0 1006.7,581.1 1010.0,583.3 1013.3,563.3 1016.7,554.4 1020.0,534.4 1024.4,520.0 1028.9,536.7 1031.1,558.9 1035.6,558.9 1040.0,574.4 1043.3,547.8 1046.7,585.6 1051.1,594.4 1055.6,604.4 1058.9,572.2 1063.3,552.2 1066.7,508.9 1070.0,517.8 1075.6,512.2 1078.9,518.9 1084.4,492.2 1088.9,521.1 1092.2,514.4 1097.8,530.0 1104.4,518.9 1110.0,501.1 1112.2,508.9 1115.6,495.6 1117.8,516.7 1122.2,505.6 1125.6,514.4 1126.7,525.6" fill="none" stroke="#7f5ecb" stroke-width="1" stroke-linejoin="round"/>
<polyline points="39.9,522.2 40.9,521.2 42.3,519.9 44.0,518.2 45.8,516.1 47.6,513.5 49.4,509.9 51.3,505.4 53.3,500.6 55.2,496.4 57.2,493.3 59.2,491.5 61.1,490.6 63.1,490.4 65.0,490.7 66.8,491.4 68.4,492.6 69.9,494.2 71.4,496.4 72.9,499.0 74.5,502.0 76.3,505.6 78.2,509.9 80.2,514.4 82.2,519.0 84.2,523.2 86.2,527.3 88.2,531.6 90.2,535.6 92.1,539.1 93.8,541.5 95.2,542.7 96.5,543.0 97.6,542.7 98.6,542.1 99.6,541.5 100.4,540.6 101.1,539.2 101.7,537.8 102.4,536.8 103.4,536.7 104.6,537.5 105.9,538.9 107.4,540.9 109.1,543.4 111.1,546.3 113.5,550.2 116.4,555.1 119.3,560.1 122.2,564.6 124.6,567.5 126.5,568.6 128.0,568.5 129.4,567.6 130.8,566.5 132.3,565.6 134.0,564.9 135.8,563.9 137.6,563.0 139.4,562.2 141.0,561.7 142.5,561.5 143.8,561.6 145.1,561.8 146.4,562.2 147.8,562.7 149.3,563.4 150.7,564.3 152.2,565.4 153.8,566.5 155.5,567.5 157.2,568.6 158.9,569.7 160.8,570.8 162.8,571.7 165.1,572.3 167.9,572.4 171.1,572.1 174.5,571.6 177.7,571.3 180.5,571.3 182.8,571.9 184.8,573.0 186.7,574.2 188.4,575.0 190.1,575.2 191.8,574.5 193.5,573.1 195.1,571.3 196.6,569.7 197.9,568.4 199.0,568.0 199.9,568.3 200.8,568.6 201.7,567.9 202.7,565.6 203.9,561.0 205.2,554.6 206.6,547.4 208.0,540.5 209.4,534.7 210.8,530.3 212.1,526.6 213.5,523.4 214.8,520.4 216.2,517.4 217.6,514.1 218.9,510.7 220.3,507.6 221.6,505.2 222.9,503.9 224.2,504.1 225.5,505.6 226.7,507.7 227.8,509.9 228.7,511.6 229.1,512.6 229.2,513.3 229.2,513.9 229.4,514.9 230.0,516.4 231.1,518.8 232.4,521.8 234.0,525.1 235.8,528.3 237.7,530.9 239.7,532.9 241.9,534.4 244.2,535.8 246.7,537.1 249.3,538.6 252.2,540.5 255.5,542.7 258.8,544.8 261.9,546.5 264.7,547.3 266.9,546.9 268.7,545.4 270.3,543.5 272.1,542.0 274.3,541.5 277.1,542.5 280.3,544.6 283.7,546.9 286.9,548.7 289.7,549.2 292.0,548.0 294.1,545.6 295.9,542.6 297.7,539.5 299.4,536.7 301.1,534.0 302.6,530.9 304.1,528.0 305.6,525.9 307.1,525.1 308.6,525.9 310.2,528.1 311.7,531.0 313.3,534.0 314.8,536.7 316.3,539.2 317.9,542.0 319.4,544.6 321.0,546.8 322.5,548.2 324.0,549.0 325.3,549.2 326.8,549.0 328.4,548.0 330.2,546.3 332.4,543.2 334.9,538.6 337.6,533.7 340.2,529.5 342.7,527.0 344.9,526.4 346.9,526.9 348.9,528.4 351.0,530.4 353.3,532.8 355.8,536.0 358.6,540.1 361.4,544.5 364.2,548.4 366.8,551.1 369.2,552.5 371.6,553.0 373.9,552.9 376.1,552.2 378.4,551.1 380.7,549.4 382.9,547.1 385.2,544.3 387.5,541.4 389.9,538.6 392.5,535.5 395.3,531.9 398.2,528.5 400.9,525.7 403.4,524.1 405.6,523.9 407.5,524.8 409.3,526.5 411.1,528.6 413.0,530.9 414.9,534.0 416.9,538.1 418.8,542.2 420.7,545.6 422.7,547.3 424.7,547.0 426.7,545.4 428.7,542.8 430.7,539.7 432.7,536.7 434.7,533.3 436.8,529.2 438.8,525.0 440.6,521.2 442.3,518.4 443.6,516.7 444.7,515.7 445.7,515.3 446.8,515.3 448.1,515.5 449.9,516.2 451.9,517.4 454.0,518.9 456.1,520.3 457.8,521.2 459.1,521.7 460.1,521.9 461.1,522.0 462.1,521.7 463.5,521.2 465.3,519.9 467.5,518.0 469.8,516.0 472.0,514.6 474.1,514.5 476.0,515.8 477.8,518.2 479.5,521.3 481.2,525.0 482.8,529.0 484.4,533.9 486.0,539.7 487.5,545.9 489.0,551.5 490.5,555.9 492.0,559.2 493.4,561.9 494.8,563.8 496.4,564.8 498.2,564.6 500.3,562.8 502.7,559.4 505.3,555.3 507.7,551.3 509.8,548.2 511.6,546.2 513.2,544.8 514.6,543.6 516.0,542.3 517.5,540.5 519.0,538.1 520.5,535.4 522.0,532.5 523.6,529.7 525.2,527.0 526.9,524.2 528.7,521.2 530.5,518.5 532.3,516.4 533.9,515.5 535.4,515.9 536.7,517.3 537.9,519.4 539.2,522.1 540.6,525.1 542.1,528.8 543.7,533.4 545.3,538.3 546.9,542.8 548.3,546.3 549.5,548.8 550.6,550.9 551.6,552.3 552.7,553.0 554.1,553.0 555.7,552.1 557.5,550.4 559.4,548.1 561.5,545.3 563.7,542.4 566.2,538.8 569.1,534.5 572.0,530.1 574.8,526.1 577.2,523.2 579.1,521.7 580.8,521.3 582.2,521.4 583.6,521.5 584.9,521.2 586.1,520.3 587.2,519.2 588.2,518.0 589.3,517.0 590.7,516.4 592.4,516.3 594.3,516.4 596.3,516.9 598.3,517.5 600.3,518.4 602.3,519.7 604.3,521.5 606.3,523.4 608.2,525.0 610.0,526.1 611.7,526.4 613.2,526.1 614.7,525.6 616.2,525.2 617.7,525.1 619.2,525.5 620.7,526.1 622.1,526.9 623.6,527.5 625.0,528.0 626.3,528.1 627.6,528.0 628.9,527.9 630.2,527.8 631.6,528.0 633.0,528.4 634.5,528.9 636.0,529.6 637.6,530.5 639.3,531.8 641.1,533.5 642.9,535.5 644.8,537.8 646.8,540.1 648.9,542.4 651.1,544.8 653.5,547.3 655.9,549.8 658.3,552.1 660.5,554.0 662.5,555.4 664.4,556.5 666.2,557.3 668.1,558.0 670.1,558.8 672.4,559.8 674.9,560.9 677.4,561.9 679.7,562.6 681.7,562.7 683.2,562.1 684.4,560.8 685.4,559.3 686.3,557.8 687.4,556.9 688.5,556.7 689.5,556.9 690.6,557.2 691.8,557.3 693.2,556.9 694.8,555.9 696.4,554.4 698.3,552.6 700.4,550.9 702.9,549.2 706.0,547.4 709.7,545.2 713.5,543.2 717.2,541.8 720.2,541.5 722.5,542.8 724.4,545.5 726.0,548.6 727.4,551.4 728.9,553.0 730.4,553.2 731.7,552.5 732.9,551.4 734.2,550.1 735.6,549.2 737.0,548.9 738.5,548.9 740.0,548.7 741.6,548.0 743.3,546.3 745.0,543.0 746.8,538.4 748.7,533.3 750.7,528.6 752.9,525.1 755.4,523.1 758.1,522.1 760.9,521.6 763.8,521.1 766.4,520.3 768.9,519.1 771.3,517.8 773.6,516.4 775.8,514.9 778.0,513.5 780.1,511.8 782.2,510.0 784.1,508.2 786.0,506.7 787.6,505.8 789.0,505.8 790.1,506.6 791.1,507.7 792.2,508.5 793.4,508.7 794.8,508.0 796.2,506.8 797.8,505.4 799.4,503.9 801.1,502.9 803.0,502.2 805.1,501.7 807.2,501.3 809.2,501.1 810.8,501.0 811.9,501.1 812.7,501.4 813.2,501.7 813.9,502.1 815.0,502.2 816.5,501.7 818.2,500.7 820.1,499.8 822.0,499.7 823.9,501.1 825.6,504.1 827.4,508.4 829.1,513.5 830.9,519.4 832.8,525.6 834.9,533.2 837.2,542.4 839.5,551.7 841.8,559.5 843.9,564.4 845.8,565.5 847.5,564.0 849.2,560.8 850.9,557.3 852.8,554.4 854.9,552.1 857.2,549.7 859.5,547.3 861.8,545.1 863.9,543.3 865.8,541.9 867.4,540.6 869.0,539.7 870.8,539.1 872.8,538.9 875.2,539.0 877.9,539.5 880.7,540.3 883.5,541.6 886.1,543.3 888.5,545.9 890.9,549.4 893.2,553.1 895.3,556.5 897.2,558.9 898.8,560.4 900.0,561.3 901.1,561.7 902.3,561.6 903.9,561.1 905.9,560.0 908.1,558.3 910.5,556.3 912.9,554.2 915.0,552.2 917.0,550.1 918.8,547.8 920.6,545.6 922.3,543.9 923.9,543.3 925.3,543.8 926.6,545.3 927.9,547.3 929.2,549.7 930.6,552.2 932.2,554.8 934.0,557.7 935.8,560.9 937.6,564.3 939.4,567.8 941.2,571.7 943.0,575.9 944.7,580.2 946.5,584.3 948.3,587.8 950.0,590.8 951.8,593.5 953.5,595.8 955.3,597.7 957.2,598.9 959.3,599.6 961.6,599.9 963.9,599.7 966.2,598.6 968.3,596.7 970.1,593.6 971.8,589.3 973.4,584.4 975.2,579.3 977.2,574.4 979.7,569.2 982.5,563.4 985.4,557.8 988.1,553.1 990.6,550.0 992.6,548.7 994.3,548.7 995.8,549.8 997.5,551.8 999.4,554.4 1001.8,558.5 1004.5,564.3 1007.2,570.4 1009.9,575.7 1012.2,578.9 1014.0,579.9 1015.4,579.6 1016.7,578.1 1018.2,575.5 1020.0,572.2 1022.4,567.1 1025.2,560.2 1028.2,552.8 1031.0,546.4 1033.3,542.2 1035.1,540.8 1036.5,541.4 1037.6,543.0 1038.8,545.0 1040.0,546.7 1041.3,547.7 1042.5,548.7 1043.8,549.9 1045.1,551.7 1046.7,554.4 1048.5,558.7 1050.6,564.5 1052.8,570.6 1054.9,576.1 1056.7,580.0 1058.1,582.7 1059.3,585.0 1060.4,586.0 1061.7,585.3 1063.3,582.2 1065.4,575.5 1067.9,565.6 1070.6,554.2 1073.2,543.3 1075.6,534.4 1077.7,527.6 1079.8,521.7 1081.7,516.7 1083.6,512.8 1085.6,510.0 1087.6,508.6 1089.5,508.7 1091.5,509.6 1093.5,511.0 1095.6,512.2 1097.8,513.6 1100.1,515.6 1102.4,517.7 1104.6,519.3 1106.7,520.0 1108.6,519.6 1110.4,518.3 1112.2,516.6 1113.9,514.8 1115.6,513.3 1117.5,512.0 1119.4,510.7 1121.4,509.5 1123.1,508.5 1124.4,507.8 1125.3,507.6 1125.9,507.8 1126.3,508.2 1126.5,508.6 1126.7,508.9" fill="none" stroke="#e3c03c" stroke-width="1.2" stroke-linejoin="round"/>
<text x="46.0" y="475.3" font-size="10" fill="#dbdbdb" font-weight="normal" textLength="13.3" lengthAdjust="spacingAndGlyphs" >RSI</text>
<text x="63.3" y="475.3" font-size="10" fill="#9a9a9a" font-weight="normal" textLength="35.7" lengthAdjust="spacingAndGlyphs" >14 close</text>
<text x="105.0" y="475.3" font-size="10" fill="#8e6fd0" font-weight="normal" textLength="24.3" lengthAdjust="spacingAndGlyphs" >56.72</text>
<text x="135.0" y="475.3" font-size="10" fill="#f0c93a" font-weight="normal" textLength="25.0" lengthAdjust="spacingAndGlyphs" >60.80</text>
<text x="1149.0" y="468.8" font-size="10.5" fill="#c7c7c7" font-weight="normal" textLength="23.0" lengthAdjust="spacingAndGlyphs" >80.00</text>
<text x="1149.0" y="492.1" font-size="10.5" fill="#c7c7c7" font-weight="normal" textLength="23.0" lengthAdjust="spacingAndGlyphs" >70.00</text>
<text x="1149.0" y="538.8" font-size="10.5" fill="#c7c7c7" font-weight="normal" textLength="23.0" lengthAdjust="spacingAndGlyphs" >50.00</text>
<text x="1149.0" y="562.2" font-size="10.5" fill="#c7c7c7" font-weight="normal" textLength="23.0" lengthAdjust="spacingAndGlyphs" >40.00</text>
<text x="1149.0" y="585.5" font-size="10.5" fill="#c7c7c7" font-weight="normal" textLength="23.0" lengthAdjust="spacingAndGlyphs" >30.00</text>
<text x="1149.0" y="608.9" font-size="10.5" fill="#c7c7c7" font-weight="normal" textLength="23.0" lengthAdjust="spacingAndGlyphs" >20.00</text>
<text x="1149.0" y="632.2" font-size="10.5" fill="#c7c7c7" font-weight="normal" textLength="23.0" lengthAdjust="spacingAndGlyphs" >10.00</text>
<rect x="1142.9" y="499.6" width="33.3" height="13.3" rx="1" fill="#f5c73d"/>
<text x="1148.9" y="509.9" font-size="10" fill="#1a1a1a" font-weight="normal" textLength="23.3" lengthAdjust="spacingAndGlyphs" >60.80</text>
<rect x="1142.9" y="513.6" width="33.3" height="12" rx="1" fill="#7e57c2"/>
<text x="1148.9" y="523.4" font-size="10" fill="#ffffff" font-weight="normal" textLength="23.3" lengthAdjust="spacingAndGlyphs" >56.72</text>
<g fill="#e6e6e6"><path d="M48.7 608.5 H59.3 V619.8 H53.6 V613.2 H48.7 Z"/><circle cx="61.6" cy="610.7" r="2.1"/><path d="M65.2 608.5 H71.6 L67.4 619.8 H61.9 Z"/></g>
<text x="77.3" y="619.3" font-size="14.5" fill="#e6e6e6" font-weight="bold" textLength="92.8" lengthAdjust="spacingAndGlyphs" >TradingView</text>
<text x="100.8" y="645.5" font-size="10.5" fill="#c7c7c7" text-anchor="middle">2월</text>
<text x="169.8" y="645.5" font-size="10.5" fill="#c7c7c7" text-anchor="middle">3</text>
<text x="238.7" y="645.5" font-size="10.5" fill="#c7c7c7" text-anchor="middle">5</text>
<text x="307.7" y="645.5" font-size="10.5" fill="#c7c7c7" text-anchor="middle">7</text>
<text x="376.6" y="645.5" font-size="10.5" fill="#c7c7c7" text-anchor="middle">9</text>
<text x="445.6" y="645.5" font-size="10.5" fill="#c7c7c7" text-anchor="middle">11</text>
<text x="514.6" y="645.5" font-size="10.5" fill="#c7c7c7" text-anchor="middle">13</text>
<text x="583.5" y="645.5" font-size="10.5" fill="#c7c7c7" text-anchor="middle">15</text>
<text x="652.5" y="645.5" font-size="10.5" fill="#c7c7c7" text-anchor="middle">17</text>
<text x="721.4" y="645.5" font-size="10.5" fill="#c7c7c7" text-anchor="middle">19</text>
<text x="790.4" y="645.5" font-size="10.5" fill="#c7c7c7" text-anchor="middle">21</text>
<text x="859.4" y="645.5" font-size="10.5" fill="#c7c7c7" text-anchor="middle">23</text>
<text x="928.3" y="645.5" font-size="10.5" fill="#c7c7c7" text-anchor="middle">25</text>
<text x="997.3" y="645.5" font-size="10.5" fill="#c7c7c7" text-anchor="middle">27</text>
<text x="1066.2" y="645.5" font-size="10.5" fill="#c7c7c7" text-anchor="middle">3월</text>
<text x="1135.2" y="645.5" font-size="10.5" fill="#c7c7c7" text-anchor="middle">3</text>
<g fill="none" stroke="#c7c7c7" stroke-width="1.1"><path d="M1169.6 636.8 H1175.4 L1178.2 642 L1175.4 647.2 H1169.6 L1166.8 642 Z"/><circle cx="1172.5" cy="642" r="1.6"/></g>
<text x="50.0" y="672.1" font-size="11.5" fill="#dbdbdb" font-weight="bold" textLength="16.7" lengthAdjust="spacingAndGlyphs" >1일</text>
<text x="76.0" y="672.1" font-size="11.5" fill="#dbdbdb" font-weight="bold" textLength="15.7" lengthAdjust="spacingAndGlyphs" >5날</text>
<text x="101.7" y="672.1" font-size="11.5" fill="#dbdbdb" font-weight="bold" textLength="16.6" lengthAdjust="spacingAndGlyphs" >1달</text>
<text x="127.0" y="672.1" font-size="11.5" fill="#dbdbdb" font-weight="bold" textLength="16.0" lengthAdjust="spacingAndGlyphs" >3달</text>
<text x="153.0" y="672.1" font-size="11.5" fill="#dbdbdb" font-weight="bold" textLength="16.0" lengthAdjust="spacingAndGlyphs" >6달</text>
<text x="179.0" y="672.1" font-size="11.5" fill="#dbdbdb" font-weight="bold" textLength="19.0" lengthAdjust="spacingAndGlyphs" >YTD</text>
<text x="207.0" y="672.1" font-size="11.5" fill="#dbdbdb" font-weight="bold" textLength="16.0" lengthAdjust="spacingAndGlyphs" >1해</text>
<text x="233.0" y="672.1" font-size="11.5" fill="#dbdbdb" font-weight="bold" textLength="16.0" lengthAdjust="spacingAndGlyphs" >5해</text>
<text x="259.0" y="672.1" font-size="11.5" fill="#dbdbdb" font-weight="bold" textLength="20.0" lengthAdjust="spacingAndGlyphs" >전체</text>
<rect x="287.8" y="660" width="1" height="15" fill="#3a3a3a"/>
<g fill="none" stroke="#dbdbdb" stroke-width="1.1"><path d="M300.2 669 V664 Q300.2 662.2 302 662.2 H311.6 Q313.4 662.2 313.4 664 V671.8 Q313.4 673.6 311.6 673.6 H306.5 M300.2 665.4 H313.4 M303.6 660 V663.5 M309.4 660 V663.5 M299 671.5 H305 M303 669.5 L305 671.5 L303 673.5"/></g>
<text x="1118.8" y="672.6" font-size="12" fill="#dbdbdb" font-weight="bold" textLength="75.8" lengthAdjust="spacingAndGlyphs" >18:33:33 UTC+9</text></svg>
</body></html>
